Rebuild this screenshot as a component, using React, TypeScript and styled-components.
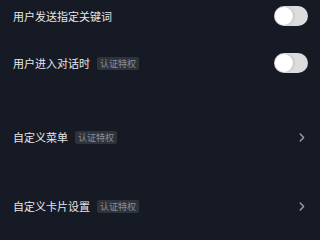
import React from "react";
import styled, { createGlobalStyle } from "styled-components";

const Global = createGlobalStyle`
  html, body { margin: 0; padding: 0; background: #161a24; }
  body { font-family: "Noto Sans CJK SC", "Noto Sans", sans-serif; }
`;

const Page = styled.div`
  width: 320px;
  height: 240px;
  background: #161a24;
  display: flex;
  flex-direction: column;
  overflow: hidden;
`;

const Row = styled.div<{ $top: number }>`
  display: flex;
  align-items: center;
  height: 20px;
  margin-top: ${(p) => p.$top}px;
  padding: 0 13px 0 13px;
`;

const Label = styled.span`
  font-size: 11px;
  line-height: 20px;
  color: #e6e7ea;
  white-space: nowrap;
`;

const Badge = styled.span`
  margin-left: 7px;
  height: 13px;
  padding: 0 3px;
  background: #2e323b;
  color: #8c8f96;
  font-size: 9px;
  line-height: 13px;
  border-radius: 2px;
  white-space: nowrap;
`;

const Spacer = styled.div`
  flex: 1;
`;

const Track = styled.div`
  width: 34px;
  height: 20px;
  border-radius: 10px;
  background: #dcdcde;
  display: flex;
  align-items: center;
  padding: 1px;
  box-sizing: border-box;
  margin-right: -1px;
`;

const Knob = styled.div`
  width: 18px;
  height: 18px;
  border-radius: 50%;
  background: #ffffff;
  box-shadow: 1px 0 2px rgba(0, 0, 0, 0.15);
`;

const Chevron = styled.svg`
  width: 6px;
  height: 9px;
  margin-right: 2px;
`;

const Toggle = () => (
  <Track>
    <Knob />
  </Track>
);

const Arrow = () => (
  <Chevron viewBox="0 0 6 9">
    <path d="M1.3 1 L4.6 4.5 L1.3 8" fill="none" stroke="#9a9da4" strokeWidth="1.5" strokeLinecap="round" strokeLinejoin="round" />
  </Chevron>
);

export default function App() {
  return (
    <Page>
      <Global />
      <Row $top={6}>
        <Label>用户发送指定关键词</Label>
        <Spacer />
        <Toggle />
      </Row>
      <Row $top={27}>
        <Label>用户进入对话时</Label>
        <Badge>认证特权</Badge>
        <Spacer />
        <Toggle />
      </Row>
      <Row $top={54}>
        <Label>自定义菜单</Label>
        <Badge>认证特权</Badge>
        <Spacer />
        <Arrow />
      </Row>
      <Row $top={49}>
        <Label>自定义卡片设置</Label>
        <Badge>认证特权</Badge>
        <Spacer />
        <Arrow />
      </Row>
    </Page>
  );
}
